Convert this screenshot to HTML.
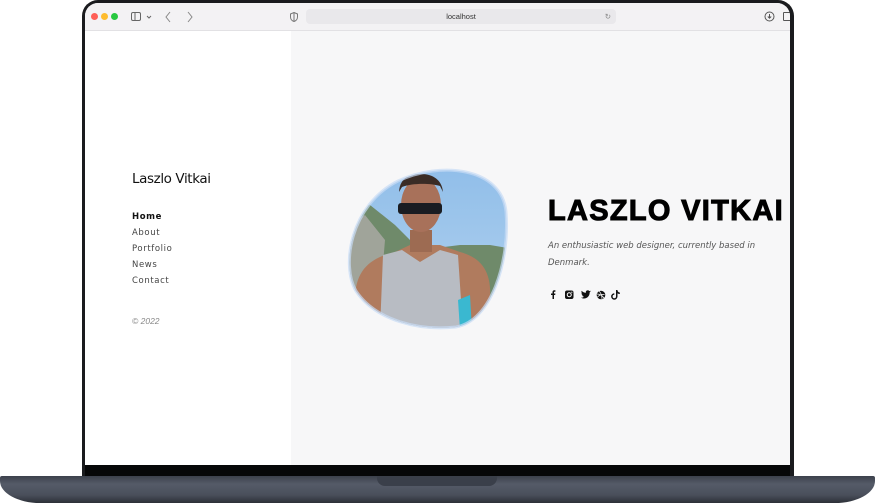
<!DOCTYPE html>
<html><head><meta charset="utf-8"><style>
*{margin:0;padding:0;box-sizing:border-box}
body{width:875px;height:503px;background:#fff;position:relative;overflow:hidden;font-family:"Liberation Sans",sans-serif}
.lid{position:absolute;left:82px;top:0;width:712px;height:478px;background:#1a1b1e;border-radius:16px 16px 0 0}
.screen{position:absolute;left:85px;top:3px;width:705px;height:462px;background:#fff;border-radius:13px 13px 0 0;overflow:hidden}
.bar{position:absolute;left:0;top:0;width:705px;height:28px;background:#f3f2f4;border-bottom:1px solid #e2e1e4}
.dot{position:absolute;top:10px;width:7px;height:7px;border-radius:50%}
.url{position:absolute;left:221px;top:6px;width:310px;height:15px;background:#e9e8eb;border-radius:4px;font-size:7.5px;color:#333;text-align:center;line-height:15px}
.side{position:absolute;left:0;top:28px;width:206px;height:434px;background:#fff}
.main{position:absolute;left:206px;top:28px;width:499px;height:434px;background:#f7f7f8}
.name{position:absolute;left:47px;top:140px;font-size:13.5px;color:#111;font-family:"DejaVu Sans",sans-serif;letter-spacing:-0.4px}
.nav{position:absolute;left:47px;top:178px;font-size:8.5px;color:#444;letter-spacing:0.6px;line-height:16px;font-family:"DejaVu Sans",sans-serif}
.nav b{color:#111}
.copy{position:absolute;left:47px;top:285px;font-size:8.5px;color:#888;font-style:italic}
h1{position:absolute;left:257px;top:164px;font-size:29px;font-weight:900;color:#000;letter-spacing:1.3px;font-family:"Liberation Sans",sans-serif;white-space:nowrap;-webkit-text-stroke:1px #000}
.desc{position:absolute;left:257px;top:207px;width:230px;font-size:8.5px;font-style:italic;color:#555;line-height:16.5px;letter-spacing:0;font-family:"DejaVu Sans",sans-serif}
.bezel{position:absolute;left:85px;top:465px;width:705px;height:11px;background:#060708}
.base{position:absolute;left:0;top:476px;width:875px;height:27px;background:linear-gradient(#3c414c,#555b68 30%,#4a4f5b 70%,#2c3038);border-radius:2px 2px 40px 40px/2px 2px 22px 22px}
.notch{position:absolute;left:377px;top:476px;width:120px;height:10px;background:#3a3f4a;border-radius:0 0 8px 8px}
</style></head><body>
<div class="lid"></div>
<div class="screen">
 <div class="bar">
  <div class="dot" style="left:6px;background:#fe5f57"></div>
  <div class="dot" style="left:16px;background:#febc2e"></div>
  <div class="dot" style="left:26px;background:#28c840"></div>
  <svg style="position:absolute;left:46px;top:9px" width="22" height="10"><rect x="0.5" y="0.5" width="9" height="8" rx="1.5" fill="none" stroke="#666"/><line x1="4" y1="1" x2="4" y2="9" stroke="#666"/><path d="M16 4l2 2 2-2" fill="none" stroke="#666"/></svg>
  <svg style="position:absolute;left:80px;top:8px" width="30" height="12"><path d="M5 1L1 6l4 5M23 1l4 5-4 5" fill="none" stroke="#888" stroke-width="1"/></svg>
  <svg style="position:absolute;left:205px;top:9px" width="8" height="10"><path d="M4 0.5L7.5 2v3c0 2.5-2 4-3.5 4.5C2.5 9 0.5 7.5 0.5 5V2z" fill="none" stroke="#777"/><path d="M4 .5v9" stroke="#777"/></svg>
  <div class="url">localhost<span style="position:absolute;right:5px;color:#888">↻</span></div>
  <svg style="position:absolute;left:679px;top:8px" width="11" height="11"><circle cx="5.5" cy="5.5" r="4.5" fill="none" stroke="#555"/><path d="M5.5 3v4M3.8 5.5l1.7 1.7 1.7-1.7" fill="none" stroke="#555"/></svg>
  <div style="position:absolute;left:698px;top:9px;width:8px;height:9px;border:1px solid #555;border-radius:1px"></div>
 </div>
 <div class="side">
  <div class="name">Laszlo Vitkai</div>
  <div class="nav"><b>Home</b><br>About<br>Portfolio<br>News<br>Contact</div>
  <div class="copy">© 2022</div>
 </div>
 <div class="main">
  <svg style="position:absolute;left:56px;top:135px" width="170" height="170" viewBox="347 166 170 170">
   <defs>
    <clipPath id="b"><path d="M398 181C440 161 502 167 506 212C510 262 491 321 456 327C420 331 376 321 356 291C341 266 350 205 398 181Z"/></clipPath>
    <linearGradient id="sky" x1="0" y1="0" x2="0" y2="1"><stop offset="0" stop-color="#8fbde9"/><stop offset="1" stop-color="#b5d4ef"/></linearGradient>
   </defs>
   <g clip-path="url(#b)">
    <rect x="340" y="160" width="180" height="180" fill="url(#sky)"/>
    <path d="M340 200L370 205 395 225 420 250 460 245 490 245 520 250V340H340Z" fill="#6f8a6a"/>
    <path d="M340 230L365 215 385 240 380 300 340 310Z" fill="#a0a49a"/>
    <path d="M355 300C355 270 370 258 395 252L410 245H440L460 252C482 258 492 272 490 300L492 340H355Z" fill="#b07b5e"/>
    <path d="M383 255L402 250 420 262 440 250 458 255 463 330H380Z" fill="#b8bcc3"/>
    <path d="M410 230h22v22h-22z" fill="#9d6b52"/>
    <ellipse cx="421" cy="205" rx="20" ry="27" fill="#a8715a"/>
    <path d="M399 192C400 176 412 174 421 174C433 174 442 180 443 192L440 186C430 183 412 183 402 187Z" fill="#3a2c26"/>
    <rect x="398" y="203" width="44" height="11" rx="3" fill="#1a1c22"/>
    <path d="M458 300L470 295 472 330 460 330Z" fill="#3ab8d0"/>
   </g>
   <path d="M398 181C440 161 502 167 506 212C510 262 491 321 456 327C420 331 376 321 356 291C341 266 350 205 398 181Z" fill="none" stroke="rgba(200,220,245,0.7)" stroke-width="3"/>
  </svg>
  <h1>LASZLO VITKAI</h1>
  <div class="desc">An enthusiastic web designer, currently based in Denmark.</div>
  <svg style="position:absolute;left:257px;top:258px" width="80" height="12" viewBox="0 0 80 12">
   <path d="M4.5 10V6H3V4.5h1.5V3.2C4.5 2 5.2 1.3 6.3 1.3H7.4V2.8H6.6c-.4 0-.6.2-.6.6v1.1h1.4L7.2 6H6v4z" fill="#111"/>
   <rect x="17" y="1.5" width="8.5" height="8.5" rx="2" fill="#111"/><circle cx="21.25" cy="5.75" r="2" fill="none" stroke="#fff" stroke-width="1"/><circle cx="23.8" cy="3.2" r=".6" fill="#fff"/>
   <path d="M43 2.5c-.4.2-.8.3-1.2.3.4-.3.8-.7.9-1.2-.4.3-.9.4-1.3.5a2 2 0 0 0-3.5 1.8C36.2 3.8 34.7 3 33.7 1.8c-.6 1-.2 2.2.6 2.7-.3 0-.6-.1-.9-.2 0 1 .7 1.8 1.6 2-.3.1-.6.1-.9 0 .3.8 1 1.3 1.9 1.4-.9.7-2 1-3.1.9 4.2 2.5 8.8-.2 8.8-5.3.4-.3.8-.6 1.1-1.1z" fill="#111"/>
   <circle cx="53" cy="6" r="4.3" fill="#111"/><path d="M49 5c2 0 5 1 7 4M51 2c2 2 3 5 3 8M49.5 8c2-2 4-3 7-2.5" fill="none" stroke="#fff" stroke-width=".7"/>
   <path d="M68 1v6.5a1.7 1.7 0 1 1-1.7-1.7V4.3a3.2 3.2 0 1 0 3.2 3.2V4.2c.7.5 1.5.8 2.3.8V3.5C70.5 3.4 69.4 2.3 69.5 1z" fill="#111"/>
  </svg>
 </div>
</div>
<div class="bezel"></div>
<div class="base"></div>
<div class="notch"></div>
</body></html>
